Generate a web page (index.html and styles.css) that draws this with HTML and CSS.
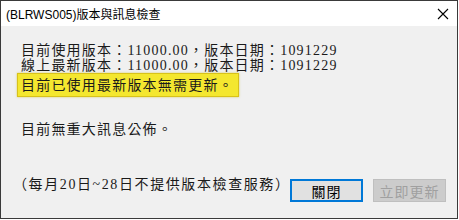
FILE: index.html
```html
<!DOCTYPE html>
<html lang="zh-Hant">
<head>
    <meta charset="UTF-8">
    <title>(BLRWS005)版本與訊息檢查</title>
    <link rel="stylesheet" href="styles.css">
</head>
<body>
    <div class="window">
        <div class="titlebar">
            <span class="title">(BLRWS005)版本與訊息檢查</span>
            <svg class="close" width="12" height="12" viewBox="0 0 12 12">
                <path d="M1 1 L11 11 M11 1 L1 11" stroke="#000" stroke-width="1.1" fill="none"/>
            </svg>
        </div>

        <div class="content">
            <div class="line">目前使用版本：11000.00，版本日期：1091229</div>
            <div class="line">線上最新版本：11000.00，版本日期：1091229</div>
            <div class="highlight">目前已使用最新版本無需更新。</div>

            <div class="line notice">目前無重大訊息公佈。</div>

            <div class="bottom">
                <div class="line note">（每月20日~28日不提供版本檢查服務）</div>
                <button class="btn btn-default">關閉</button>
                <button class="btn" disabled>立即更新</button>
            </div>
        </div>
    </div>
</body>
</html>
```

FILE: styles.css
```css
body {
    margin: 0;
    background: #ffffff;
}

.window {
    width: 456px;
    height: 217px;
    border: 1px solid #3a3a3a;
    background: #f0f0f0;
    display: flex;
    flex-direction: column;
}

.titlebar {
    height: 25px;
    background: #ffffff;
    display: flex;
    align-items: center;
    justify-content: space-between;
    padding: 0 8px 0 5px;
}

.title {
    font-family: "Liberation Sans", "Noto Sans CJK TC", sans-serif;
    font-size: 12px;
    color: #000;
}

.content {
    padding: 17px 0 0 20px;
    font-family: "Liberation Serif", "Noto Sans CJK TC", serif;
    font-size: 14px;
    letter-spacing: 1.2px;
    color: #1a1a1a;
}

.line {
    line-height: 15px;
    white-space: nowrap;
}

.highlight {
    display: inline-block;
    margin: 0 0 0 -4px;
    padding: 4px 4px 3px 3px;
    line-height: 15px;
    background: #f4e72f;
    border: 1px solid #d8c21a;
    box-shadow: 0 0 2px rgba(200, 180, 0, 0.6);
}

.notice {
    margin-top: 25px;
}

.bottom {
    display: flex;
    align-items: flex-start;
    margin-top: 42px;
}

.note {
    width: 277px;
    margin: -2px 0 0 -8px;
    letter-spacing: 1.6px;
}

.btn {
    width: 73px;
    height: 23px;
    margin-right: 10px;
    font-family: "Noto Sans CJK TC", sans-serif;
    font-size: 14px;
    letter-spacing: 1px;
    line-height: 1;
    color: #000;
    background: #e1e1e1;
    border: 1px solid #adadad;
    padding: 0;
}

.btn-default {
    border: 2px solid #0078d7;
}

.btn:disabled {
    color: #a0a0a0;
    background: #cccccc;
    border-color: #bfbfbf;
}
```
